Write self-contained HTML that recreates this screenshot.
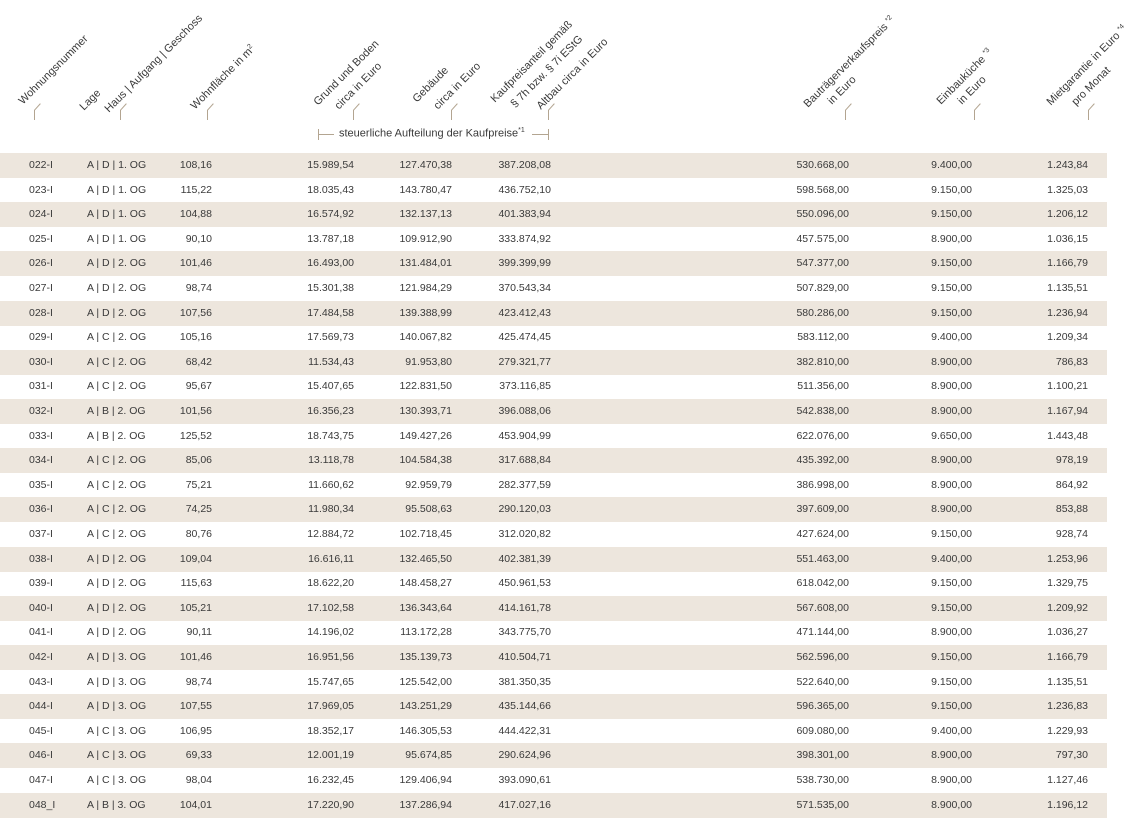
<!DOCTYPE html>
<html><head><meta charset="utf-8">
<style>
html,body{margin:0;padding:0;background:#fff;}
body{width:1141px;height:818px;position:relative;overflow:hidden;font-family:"Liberation Sans",sans-serif;color:#3a3a3a;font-size:10.5px;}
.h{position:absolute;white-space:nowrap;transform-origin:0 100%;transform:rotate(-45deg);font-size:11px;line-height:12px;height:12px;color:#3a3a3a;}
.h sup{font-size:7px;vertical-align:4px;line-height:0}
.tk{position:absolute;top:110px;width:1px;height:10px;background:#b3a591;}
.tk::after{content:"";position:absolute;left:0;top:0;width:9px;height:1px;background:#b3a591;transform-origin:0 0;transform:rotate(-48deg);}
.r{position:absolute;left:0;width:1107px;height:25px;}
.r.b{background:#ede6dd;}
.r span{position:absolute;top:6px;line-height:13px;white-space:nowrap;}
.c1{left:29px}.c2{left:87px}
.c3{right:895px}.c4{right:753px}.c5{right:655px}.c6{right:556px}.c7{right:258px}.c8{right:135px}.c9{right:19px}
.br{position:absolute;background:#b3a591;}
</style></head><body>
<div class="h" style="left:25px;top:95px">Wohnungsnummer</div>
<div class="h" style="left:86px;top:101px">Lage</div>
<div class="h" style="left:111px;top:103px">Haus | Aufgang | Geschoss</div>
<div class="h" style="left:197px;top:100px">Wohnfläche in m<sup>2</sup></div>
<div class="h" style="left:320px;top:96px">Grund und Boden</div>
<div class="h" style="left:341px;top:100px">circa in Euro</div>
<div class="h" style="left:419px;top:93px">Gebäude</div>
<div class="h" style="left:440px;top:100px">circa in Euro</div>
<div class="h" style="left:497px;top:93px">Kaufpreisanteil gemäß</div>
<div class="h" style="left:517px;top:98px">§ 7h bzw. § 7i EStG</div>
<div class="h" style="left:543px;top:100px">Altbau circa in Euro</div>
<div class="h" style="left:810px;top:98px">Bauträgerverkaufspreis <sup>*2</sup></div>
<div class="h" style="left:834px;top:95px">in Euro</div>
<div class="h" style="left:943px;top:95px">Einbauküche <sup>*3</sup></div>
<div class="h" style="left:964px;top:95px">in Euro</div>
<div class="h" style="left:1053px;top:96px">Mietgarantie in Euro <sup>*4</sup></div>
<div class="h" style="left:1078px;top:96px">pro Monat</div>

<div class="tk" style="left:34px"></div>
<div class="tk" style="left:120px"></div>
<div class="tk" style="left:207px"></div>
<div class="tk" style="left:353px"></div>
<div class="tk" style="left:451px"></div>
<div class="tk" style="left:548px"></div>
<div class="tk" style="left:845px"></div>
<div class="tk" style="left:974px"></div>
<div class="tk" style="left:1088px"></div>

<div class="br" style="left:318px;top:129px;width:1px;height:11px"></div>
<div class="br" style="left:318px;top:134px;width:16px;height:1px"></div>
<div class="br" style="left:532px;top:134px;width:16px;height:1px"></div>
<div class="br" style="left:548px;top:129px;width:1px;height:11px"></div>
<div style="position:absolute;left:339px;top:127px;font-size:11px;white-space:nowrap">steuerliche Aufteilung der Kaufpreise<sup style="font-size:7px">*1</sup></div>

<div class="r b" style="top:153px"><span class="c1">022-I</span><span class="c2">A | D | 1. OG</span><span class="c3">108,16</span><span class="c4">15.989,54</span><span class="c5">127.470,38</span><span class="c6">387.208,08</span><span class="c7">530.668,00</span><span class="c8">9.400,00</span><span class="c9">1.243,84</span></div>
<div class="r" style="top:177.6px"><span class="c1">023-I</span><span class="c2">A | D | 1. OG</span><span class="c3">115,22</span><span class="c4">18.035,43</span><span class="c5">143.780,47</span><span class="c6">436.752,10</span><span class="c7">598.568,00</span><span class="c8">9.150,00</span><span class="c9">1.325,03</span></div>
<div class="r b" style="top:202.2px"><span class="c1">024-I</span><span class="c2">A | D | 1. OG</span><span class="c3">104,88</span><span class="c4">16.574,92</span><span class="c5">132.137,13</span><span class="c6">401.383,94</span><span class="c7">550.096,00</span><span class="c8">9.150,00</span><span class="c9">1.206,12</span></div>
<div class="r" style="top:226.8px"><span class="c1">025-I</span><span class="c2">A | D | 1. OG</span><span class="c3">90,10</span><span class="c4">13.787,18</span><span class="c5">109.912,90</span><span class="c6">333.874,92</span><span class="c7">457.575,00</span><span class="c8">8.900,00</span><span class="c9">1.036,15</span></div>
<div class="r b" style="top:251.4px"><span class="c1">026-I</span><span class="c2">A | D | 2. OG</span><span class="c3">101,46</span><span class="c4">16.493,00</span><span class="c5">131.484,01</span><span class="c6">399.399,99</span><span class="c7">547.377,00</span><span class="c8">9.150,00</span><span class="c9">1.166,79</span></div>
<div class="r" style="top:276px"><span class="c1">027-I</span><span class="c2">A | D | 2. OG</span><span class="c3">98,74</span><span class="c4">15.301,38</span><span class="c5">121.984,29</span><span class="c6">370.543,34</span><span class="c7">507.829,00</span><span class="c8">9.150,00</span><span class="c9">1.135,51</span></div>
<div class="r b" style="top:300.6px"><span class="c1">028-I</span><span class="c2">A | D | 2. OG</span><span class="c3">107,56</span><span class="c4">17.484,58</span><span class="c5">139.388,99</span><span class="c6">423.412,43</span><span class="c7">580.286,00</span><span class="c8">9.150,00</span><span class="c9">1.236,94</span></div>
<div class="r" style="top:325.2px"><span class="c1">029-I</span><span class="c2">A | C | 2. OG</span><span class="c3">105,16</span><span class="c4">17.569,73</span><span class="c5">140.067,82</span><span class="c6">425.474,45</span><span class="c7">583.112,00</span><span class="c8">9.400,00</span><span class="c9">1.209,34</span></div>
<div class="r b" style="top:349.8px"><span class="c1">030-I</span><span class="c2">A | C | 2. OG</span><span class="c3">68,42</span><span class="c4">11.534,43</span><span class="c5">91.953,80</span><span class="c6">279.321,77</span><span class="c7">382.810,00</span><span class="c8">8.900,00</span><span class="c9">786,83</span></div>
<div class="r" style="top:374.4px"><span class="c1">031-I</span><span class="c2">A | C | 2. OG</span><span class="c3">95,67</span><span class="c4">15.407,65</span><span class="c5">122.831,50</span><span class="c6">373.116,85</span><span class="c7">511.356,00</span><span class="c8">8.900,00</span><span class="c9">1.100,21</span></div>
<div class="r b" style="top:399px"><span class="c1">032-I</span><span class="c2">A | B | 2. OG</span><span class="c3">101,56</span><span class="c4">16.356,23</span><span class="c5">130.393,71</span><span class="c6">396.088,06</span><span class="c7">542.838,00</span><span class="c8">8.900,00</span><span class="c9">1.167,94</span></div>
<div class="r" style="top:423.6px"><span class="c1">033-I</span><span class="c2">A | B | 2. OG</span><span class="c3">125,52</span><span class="c4">18.743,75</span><span class="c5">149.427,26</span><span class="c6">453.904,99</span><span class="c7">622.076,00</span><span class="c8">9.650,00</span><span class="c9">1.443,48</span></div>
<div class="r b" style="top:448.2px"><span class="c1">034-I</span><span class="c2">A | C | 2. OG</span><span class="c3">85,06</span><span class="c4">13.118,78</span><span class="c5">104.584,38</span><span class="c6">317.688,84</span><span class="c7">435.392,00</span><span class="c8">8.900,00</span><span class="c9">978,19</span></div>
<div class="r" style="top:472.8px"><span class="c1">035-I</span><span class="c2">A | C | 2. OG</span><span class="c3">75,21</span><span class="c4">11.660,62</span><span class="c5">92.959,79</span><span class="c6">282.377,59</span><span class="c7">386.998,00</span><span class="c8">8.900,00</span><span class="c9">864,92</span></div>
<div class="r b" style="top:497.4px"><span class="c1">036-I</span><span class="c2">A | C | 2. OG</span><span class="c3">74,25</span><span class="c4">11.980,34</span><span class="c5">95.508,63</span><span class="c6">290.120,03</span><span class="c7">397.609,00</span><span class="c8">8.900,00</span><span class="c9">853,88</span></div>
<div class="r" style="top:522px"><span class="c1">037-I</span><span class="c2">A | C | 2. OG</span><span class="c3">80,76</span><span class="c4">12.884,72</span><span class="c5">102.718,45</span><span class="c6">312.020,82</span><span class="c7">427.624,00</span><span class="c8">9.150,00</span><span class="c9">928,74</span></div>
<div class="r b" style="top:546.6px"><span class="c1">038-I</span><span class="c2">A | D | 2. OG</span><span class="c3">109,04</span><span class="c4">16.616,11</span><span class="c5">132.465,50</span><span class="c6">402.381,39</span><span class="c7">551.463,00</span><span class="c8">9.400,00</span><span class="c9">1.253,96</span></div>
<div class="r" style="top:571.2px"><span class="c1">039-I</span><span class="c2">A | D | 2. OG</span><span class="c3">115,63</span><span class="c4">18.622,20</span><span class="c5">148.458,27</span><span class="c6">450.961,53</span><span class="c7">618.042,00</span><span class="c8">9.150,00</span><span class="c9">1.329,75</span></div>
<div class="r b" style="top:595.8px"><span class="c1">040-I</span><span class="c2">A | D | 2. OG</span><span class="c3">105,21</span><span class="c4">17.102,58</span><span class="c5">136.343,64</span><span class="c6">414.161,78</span><span class="c7">567.608,00</span><span class="c8">9.150,00</span><span class="c9">1.209,92</span></div>
<div class="r" style="top:620.4px"><span class="c1">041-I</span><span class="c2">A | D | 2. OG</span><span class="c3">90,11</span><span class="c4">14.196,02</span><span class="c5">113.172,28</span><span class="c6">343.775,70</span><span class="c7">471.144,00</span><span class="c8">8.900,00</span><span class="c9">1.036,27</span></div>
<div class="r b" style="top:645px"><span class="c1">042-I</span><span class="c2">A | D | 3. OG</span><span class="c3">101,46</span><span class="c4">16.951,56</span><span class="c5">135.139,73</span><span class="c6">410.504,71</span><span class="c7">562.596,00</span><span class="c8">9.150,00</span><span class="c9">1.166,79</span></div>
<div class="r" style="top:669.6px"><span class="c1">043-I</span><span class="c2">A | D | 3. OG</span><span class="c3">98,74</span><span class="c4">15.747,65</span><span class="c5">125.542,00</span><span class="c6">381.350,35</span><span class="c7">522.640,00</span><span class="c8">9.150,00</span><span class="c9">1.135,51</span></div>
<div class="r b" style="top:694.2px"><span class="c1">044-I</span><span class="c2">A | D | 3. OG</span><span class="c3">107,55</span><span class="c4">17.969,05</span><span class="c5">143.251,29</span><span class="c6">435.144,66</span><span class="c7">596.365,00</span><span class="c8">9.150,00</span><span class="c9">1.236,83</span></div>
<div class="r" style="top:718.8px"><span class="c1">045-I</span><span class="c2">A | C | 3. OG</span><span class="c3">106,95</span><span class="c4">18.352,17</span><span class="c5">146.305,53</span><span class="c6">444.422,31</span><span class="c7">609.080,00</span><span class="c8">9.400,00</span><span class="c9">1.229,93</span></div>
<div class="r b" style="top:743.4px"><span class="c1">046-I</span><span class="c2">A | C | 3. OG</span><span class="c3">69,33</span><span class="c4">12.001,19</span><span class="c5">95.674,85</span><span class="c6">290.624,96</span><span class="c7">398.301,00</span><span class="c8">8.900,00</span><span class="c9">797,30</span></div>
<div class="r" style="top:768px"><span class="c1">047-I</span><span class="c2">A | C | 3. OG</span><span class="c3">98,04</span><span class="c4">16.232,45</span><span class="c5">129.406,94</span><span class="c6">393.090,61</span><span class="c7">538.730,00</span><span class="c8">8.900,00</span><span class="c9">1.127,46</span></div>
<div class="r b" style="top:792.6px"><span class="c1">048_I</span><span class="c2">A | B | 3. OG</span><span class="c3">104,01</span><span class="c4">17.220,90</span><span class="c5">137.286,94</span><span class="c6">417.027,16</span><span class="c7">571.535,00</span><span class="c8">8.900,00</span><span class="c9">1.196,12</span></div>
</body></html>
